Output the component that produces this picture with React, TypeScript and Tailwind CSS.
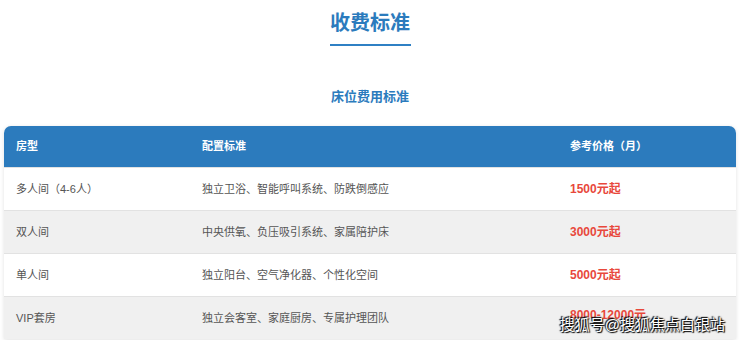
const rows = [
  { type: "多人间（4-6人）", config: "独立卫浴、智能呼叫系统、防跌倒感应", price: "1500元起" },
  { type: "双人间", config: "中央供氧、负压吸引系统、家属陪护床", price: "3000元起" },
  { type: "单人间", config: "独立阳台、空气净化器、个性化空间", price: "5000元起" },
  { type: "VIP套房", config: "独立会客室、家庭厨房、专属护理团队", price: "8000-12000元" },
];

export default function App() {
  return (
    <div
      className="relative w-[740px] h-[340px] overflow-hidden bg-white"
      style={{ fontFamily: '"Liberation Sans", "Noto Sans CJK SC", sans-serif' }}
    >
      <div className="flex flex-col items-center pt-[9px]">
        <h1 className="text-[20px] leading-[28px] font-bold text-[#2b7bbd]">收费标准</h1>
        <div className="mt-[7px] w-[81px] h-[2px] bg-[#2f80c4]" />
        <h2 className="mt-[42px] text-[13px] leading-[18px] font-bold text-[#2b7bbd]">床位费用标准</h2>
      </div>

      <div className="mx-[4px] mt-[20px] rounded-t-[7px] overflow-hidden shadow-[0_1px_4px_rgba(0,0,0,0.12)]">
        <div className="flex items-center h-[41px] bg-[#2c7bbd] text-white text-[11px] font-bold">
          <div className="w-[198px] pl-[12px]">房型</div>
          <div className="w-[368px]">配置标准</div>
          <div className="flex-1">参考价格（月）</div>
        </div>
        {rows.map((r, i) => (
          <div
            key={r.type}
            className={
              "flex items-center h-[43px] text-[11px] text-[#555] border-t border-[#e2e2e2] " +
              (i % 2 === 1 ? "bg-[#f0f0f0]" : "bg-white")
            }
          >
            <div className="w-[198px] pl-[12px]">{r.type}</div>
            <div className="w-[368px]">{r.config}</div>
            <div className={"flex-1 font-bold text-[12px] text-[#e8483c]" + (i === 3 ? " -mt-[6px]" : "")}>
              {r.price}
            </div>
          </div>
        ))}
      </div>

      <div
        className="absolute right-[15px] bottom-[5px] text-[15px] leading-[20px] text-white"
        style={{ textShadow: "0 0 2px #000, 1px 1px 1px #000, -1px -1px 1px #000" }}
      >
        搜狐号@搜狐焦点白银站
      </div>
    </div>
  );
}
